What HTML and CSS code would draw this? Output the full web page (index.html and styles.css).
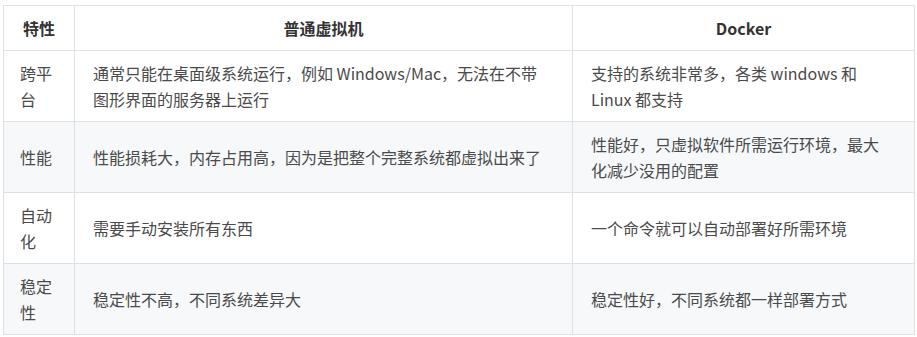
FILE: index.html
```html
<!DOCTYPE html>
<html lang="zh-CN">
<head>
    <meta charset="UTF-8">
    <title>虚拟机与 Docker 对比</title>
    <link rel="stylesheet" href="styles.css">
</head>
<body>
    <table class="compare">
        <colgroup>
            <col class="col-name">
            <col class="col-vm">
            <col class="col-docker">
        </colgroup>
        <thead>
            <tr>
                <th>特性</th>
                <th>普通虚拟机</th>
                <th>Docker</th>
            </tr>
        </thead>
        <tbody>
            <tr>
                <td>跨平台</td>
                <td>通常只能在桌面级系统运行，例如 Windows/Mac，无法在不带图形界面的服务器上运行</td>
                <td>支持的系统非常多，各类 windows 和 Linux 都支持</td>
            </tr>
            <tr>
                <td>性能</td>
                <td>性能损耗大，内存占用高，因为是把整个完整系统都虚拟出来了</td>
                <td>性能好，只虚拟软件所需运行环境，最大化减少没用的配置</td>
            </tr>
            <tr>
                <td>自动化</td>
                <td>需要手动安装所有东西</td>
                <td>一个命令就可以自动部署好所需环境</td>
            </tr>
            <tr>
                <td>稳定性</td>
                <td>稳定性不高，不同系统差异大</td>
                <td>稳定性好，不同系统都一样部署方式</td>
            </tr>
        </tbody>
    </table>
</body>
</html>
```

FILE: styles.css
```css
* {
    margin: 0;
    padding: 0;
    box-sizing: border-box;
}
body {
    font-family: "Noto Sans CJK SC", "Noto Sans", sans-serif;
    background: #fff;
    color: #4a4a4a;
    padding: 5px 3px;
}

/* Table */
.compare {
    width: 911px;
    border-collapse: collapse;
    table-layout: fixed;
    font-size: 16px;
    line-height: 26px;
}
.col-name {
    width: 71px;
}
.col-vm {
    width: 498px;
}
.col-docker {
    width: 342px;
}
.compare th,
.compare td {
    border: 1px solid #dfe2e5;
    padding: 9px 28px 9px 18px;
    vertical-align: middle;
}
.compare td:first-child {
    padding: 9px 16px;
}
.compare th {
    font-weight: bold;
    color: #333;
    text-align: center;
    background: #fff;
    padding: 9px 18px;
}
.compare tbody tr:nth-child(2n) {
    background: #f6f8fa;
}
```
